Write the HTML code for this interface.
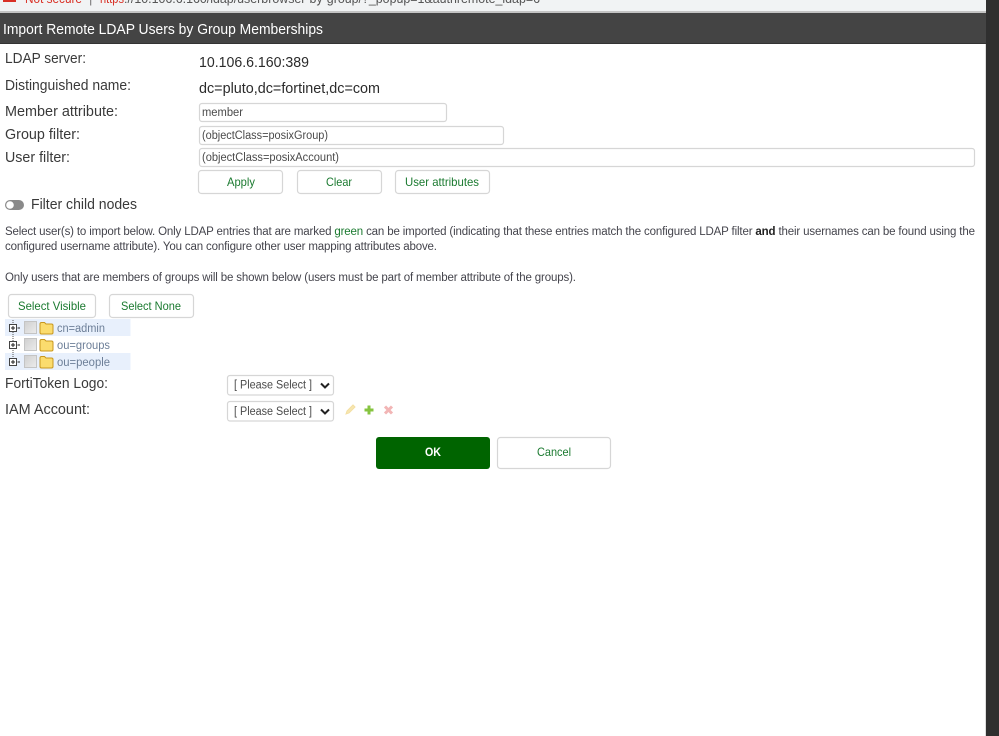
<!DOCTYPE html>
<html><head><meta charset="utf-8"><title>Import Remote LDAP Users by Group Memberships</title>
<style>
html,body{margin:0;padding:0;background:#fff;width:999px;height:736px;overflow:hidden}
svg{display:block}
text{font-family:"Liberation Sans",sans-serif}
.l{font-size:14.5px;fill:#3a3a3a}
.v{font-size:14.5px;fill:#2b2b2b}
.i{font-size:11.5px;fill:#4a4a4a}
.p{font-size:11.5px;fill:#44444c}
.b{font-size:12px;fill:#1b7a30}
.t{font-size:11.5px;fill:#6d7f98}
.box{fill:#fff;stroke:#d6d6d6;stroke-width:1.2}
</style></head><body>
<svg width="999" height="736" viewBox="0 0 999 736" xmlns="http://www.w3.org/2000/svg">
<defs>
<linearGradient id="cb" x1="0" y1="0" x2="1" y2="1"><stop offset="0" stop-color="#cfcfcf"/><stop offset="1" stop-color="#ececec"/></linearGradient>
</defs>
<rect width="999" height="736" fill="#fff"/>
<rect width="986" height="11" fill="#f1f3f4"/>
<rect y="11" width="986" height="2" fill="#c4c4c4"/>
<rect x="3" y="0" width="13" height="2" fill="#d93025"/>
<text x="25" y="3" font-size="13" fill="#d93025" textLength="57" lengthAdjust="spacingAndGlyphs">Not secure</text>
<text x="89" y="3" font-size="13" fill="#777">|</text>
<text x="100" y="3" font-size="13" fill="#d93025" textLength="24" lengthAdjust="spacingAndGlyphs">https</text>
<text x="124" y="3" font-size="13" fill="#555" textLength="416" lengthAdjust="spacingAndGlyphs">://10.106.6.160/ldap/userbrowser-by-group/?_popup=1&amp;authremote_ldap=6</text>
<rect y="13" width="986" height="31" fill="#444"/>
<rect y="43" width="986" height="1" fill="#333"/>
<text x="3" y="34" font-size="14.5" fill="#fff" textLength="320" lengthAdjust="spacingAndGlyphs">Import Remote LDAP Users by Group Memberships</text>
<rect x="986" width="13" height="736" fill="#2f2f2f"/>
<rect x="985" y="44" width="1" height="692" fill="#ddd"/>

<text class="l" x="5" y="63" textLength="81" lengthAdjust="spacingAndGlyphs">LDAP server:</text>
<text class="v" x="199" y="67" textLength="110" lengthAdjust="spacingAndGlyphs">10.106.6.160:389</text>
<text class="l" x="5" y="90" textLength="126" lengthAdjust="spacingAndGlyphs">Distinguished name:</text>
<text class="v" x="199" y="93" textLength="181" lengthAdjust="spacingAndGlyphs">dc=pluto,dc=fortinet,dc=com</text>
<text class="l" x="5" y="116" textLength="113" lengthAdjust="spacingAndGlyphs">Member attribute:</text>
<text class="l" x="5" y="139" textLength="75" lengthAdjust="spacingAndGlyphs">Group filter:</text>
<text class="l" x="5" y="162" textLength="65" lengthAdjust="spacingAndGlyphs">User filter:</text>

<rect class="box" x="199.500" y="103.500" width="247" height="18" rx="2.500"/>
<rect class="box" x="199.500" y="126.500" width="304" height="18" rx="2.500"/>
<rect class="box" x="199.500" y="148.500" width="775" height="18" rx="2.500"/>
<text class="i" x="202" y="116" textLength="41" lengthAdjust="spacingAndGlyphs">member</text>
<text class="i" x="202" y="139" textLength="126" lengthAdjust="spacingAndGlyphs">(objectClass=posixGroup)</text>
<text class="i" x="202" y="161" textLength="137" lengthAdjust="spacingAndGlyphs">(objectClass=posixAccount)</text>

<rect class="box" x="198.500" y="170.500" width="84" height="23" rx="3"/>
<rect class="box" x="297.500" y="170.500" width="84" height="23" rx="3"/>
<rect class="box" x="395.500" y="170.500" width="94" height="23" rx="3"/>
<text class="b" x="227" y="186" textLength="28" lengthAdjust="spacingAndGlyphs">Apply</text>
<text class="b" x="326" y="186" textLength="26" lengthAdjust="spacingAndGlyphs">Clear</text>
<text class="b" x="405" y="186" textLength="74" lengthAdjust="spacingAndGlyphs">User attributes</text>

<rect x="5" y="200" width="19" height="10" rx="5" fill="#8a8a8a"/>
<circle cx="10" cy="205" r="3.800" fill="#fff"/>
<text class="l" x="31" y="209" textLength="106" lengthAdjust="spacingAndGlyphs">Filter child nodes</text>

<text class="p" x="5" y="235" textLength="970" lengthAdjust="spacing">Select user(s) to import below. Only LDAP entries that are marked <tspan fill="#1b7a30">green</tspan> can be imported (indicating that these entries match the configured LDAP filter <tspan font-weight="bold" fill="#222">and</tspan> their usernames can be found using the</text>
<text class="p" x="5" y="250" textLength="432" lengthAdjust="spacing">configured username attribute). You can configure other user mapping attributes above.</text>
<text class="p" x="5" y="281" textLength="571" lengthAdjust="spacing">Only users that are members of groups will be shown below (users must be part of member attribute of the groups).</text>

<rect class="box" x="8.500" y="294.500" width="87" height="23" rx="3"/>
<rect class="box" x="109.500" y="294.500" width="84" height="23" rx="3"/>
<text class="b" x="18" y="310" textLength="68" lengthAdjust="spacingAndGlyphs">Select Visible</text>
<text class="b" x="121" y="310" textLength="60" lengthAdjust="spacingAndGlyphs">Select None</text>

<rect x="5" y="319" width="125.500" height="17" fill="#e8f0fc"/>
<rect x="5" y="353" width="125.500" height="17" fill="#e8f0fc"/>
<path d="M13 320V358" stroke="#555" stroke-width="1" stroke-dasharray="1 1" fill="none"/>
<g>
<rect x="9.500" y="324.500" width="7" height="7" fill="#fff" stroke="#444"/><path d="M11 328H15M13 326V330M17.500 328H20" stroke="#222" fill="none"/>
<rect x="24.500" y="321.500" width="12" height="12" fill="url(#cb)" stroke="#c4c4c4"/>
<path d="M40 324q0-1.500 1.500-1.500h3l1.500 1.500h5.500q1.500 0 1.500 1.500v7q0 1.500-1.500 1.500h-10q-1.500 0-1.500-1.500z" fill="#fbdc6e" stroke="#c8971f"/>
</g>
<g transform="translate(0,17)">
<rect x="9.500" y="324.500" width="7" height="7" fill="#fff" stroke="#444"/><path d="M11 328H15M13 326V330M17.500 328H20" stroke="#222" fill="none"/>
<rect x="24.500" y="321.500" width="12" height="12" fill="url(#cb)" stroke="#c4c4c4"/>
<path d="M40 324q0-1.500 1.500-1.500h3l1.500 1.500h5.500q1.500 0 1.500 1.500v7q0 1.500-1.500 1.500h-10q-1.500 0-1.500-1.500z" fill="#fbdc6e" stroke="#c8971f"/>
</g>
<g transform="translate(0,34)">
<rect x="9.500" y="324.500" width="7" height="7" fill="#fff" stroke="#444"/><path d="M11 328H15M13 326V330M17.500 328H20" stroke="#222" fill="none"/>
<rect x="24.500" y="321.500" width="12" height="12" fill="url(#cb)" stroke="#c4c4c4"/>
<path d="M40 324q0-1.500 1.500-1.500h3l1.500 1.500h5.500q1.500 0 1.500 1.500v7q0 1.500-1.500 1.500h-10q-1.500 0-1.500-1.500z" fill="#fbdc6e" stroke="#c8971f"/>
</g>
<text class="t" x="57" y="332" textLength="48" lengthAdjust="spacingAndGlyphs">cn=admin</text>
<text class="t" x="57" y="349" textLength="53" lengthAdjust="spacingAndGlyphs">ou=groups</text>
<text class="t" x="57" y="366" textLength="53" lengthAdjust="spacingAndGlyphs">ou=people</text>

<text class="l" x="5" y="388" textLength="103" lengthAdjust="spacingAndGlyphs">FortiToken Logo:</text>
<text class="l" x="5" y="414" textLength="85" lengthAdjust="spacingAndGlyphs">IAM Account:</text>

<rect class="box" x="227.500" y="375.500" width="106" height="19.500" rx="2.500"/>
<rect class="box" x="227.500" y="401.500" width="106" height="19.500" rx="2.500"/>
<text class="i" x="234" y="388.500" textLength="78" lengthAdjust="spacingAndGlyphs">[ Please Select ]</text>
<text class="i" x="234" y="415" textLength="78" lengthAdjust="spacingAndGlyphs">[ Please Select ]</text>
<path d="M321 383.500l4 4 4-4" stroke="#222" stroke-width="2" fill="none"/>
<path d="M321 409.500l4 4 4-4" stroke="#222" stroke-width="2" fill="none"/>

<path d="M346 414l1-3 6-6 2 2-6 6z" fill="#f7e6b0" stroke="#f3dfa2"/>
<path d="M369 405.500v9M364.500 410h9" stroke="#86c440" stroke-width="3" fill="none"/>
<path d="M385 406.500l7 7M392 406.500l-7 7" stroke="#f2b5b5" stroke-width="3" fill="none"/>

<rect x="376" y="437" width="114" height="32" rx="3" fill="#006400"/>
<text x="425" y="456" font-size="12" font-weight="bold" fill="#fff" textLength="16" lengthAdjust="spacingAndGlyphs">OK</text>
<rect x="497.500" y="437.500" width="113" height="31" rx="3" fill="#fff" stroke="#d6d6d6" stroke-width="1.200"/>
<text class="b" x="537" y="456" textLength="34" lengthAdjust="spacingAndGlyphs">Cancel</text>
</svg>
</body></html>
